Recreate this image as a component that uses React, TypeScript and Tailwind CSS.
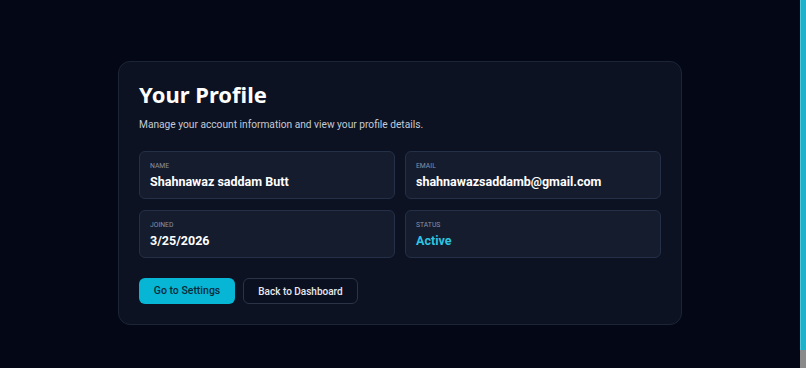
const fields = [
  { label: "Name", value: "Shahnawaz saddam Butt" },
  { label: "Email", value: "shahnawazsaddamb@gmail.com" },
  { label: "Joined", value: "3/25/2026" },
  { label: "Status", value: "Active", accent: true },
];

const body = { fontFamily: 'Roboto, "Noto Sans", sans-serif' };

export default function App() {
  return (
    <div
      className="flex h-screen overflow-hidden bg-[#040716] text-white"
      style={{ fontFamily: '"Noto Sans", "Open Sans", sans-serif' }}
    >
      <main className="flex flex-1 justify-center pt-[61px]">
        <div className="h-fit w-[564px] rounded-xl border border-[#1c2536] bg-[#0c1222] p-5">
          <h1 className="text-[22px] font-bold leading-[24px]">Your Profile</h1>
          <p className="mt-[12px] text-[10.2px] leading-[14px] text-[#c3cad6]" style={body}>
            Manage your account information and view your profile details.
          </p>

          <div className="mt-[19px] grid grid-cols-2 gap-x-[10px] gap-y-[11px]" style={body}>
            {fields.map((f) => (
              <div
                key={f.label}
                className="h-[48px] rounded-md border border-[#243047] bg-[#141c2e] px-[10px] pt-[10px]"
              >
                <div className="text-[6.8px] uppercase leading-[9px] text-[#8a93a5]">{f.label}</div>
                <div
                  className={
                    f.accent
                      ? "mt-[3px] text-[12.5px] font-bold leading-[16px] text-[#2ec5e0]"
                      : "mt-[3px] text-[12.5px] font-bold leading-[16px] text-white"
                  }
                >
                  {f.value}
                </div>
              </div>
            ))}
          </div>

          <div className="mt-[20px] flex gap-2" style={body}>
            <button className="h-[26px] w-[96px] rounded-md bg-[#06b6d4] text-[10.5px] font-medium text-[#0b2a3a]">
              Go to Settings
            </button>
            <button className="h-[26px] w-[115px] rounded-md border border-[#2a3446] bg-[#0b1020] text-[10px] font-medium text-[#e5e9f0]">
              Back to Dashboard
            </button>
          </div>
        </div>
      </main>

      {/* scrollbar */}
      <div className="flex w-[6px] flex-col">
        <div className="flex-1 border-l border-[#4cc8dc] bg-[#1fb1c9]" />
        <div className="h-[18px] bg-[#8a8a8a]" />
      </div>
    </div>
  );
}
